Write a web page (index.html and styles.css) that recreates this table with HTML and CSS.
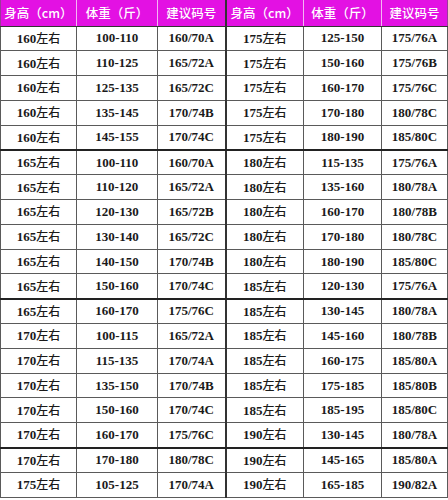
FILE: index.html
```html
<!DOCTYPE html>
<html lang="zh">
<head>
<meta charset="utf-8">
<link rel="stylesheet" href="styles.css">
</head>
<body>
<table class="size-table">
<colgroup>
<col class="c1"><col class="c2"><col class="c3"><col class="c4"><col class="c5"><col class="c6">
</colgroup>
<thead>
<tr class="head">
<th>身高（cm）</th><th>体重（斤）</th><th class="mid">建议码号</th><th>身高（cm）</th><th>体重（斤）</th><th>建议码号</th>
</tr>
</thead>
<tbody>
<tr><td>160<span class="cn">左右</span></td><td>100-110</td><td class="mid">160/70A</td><td>175<span class="cn">左右</span></td><td>125-150</td><td>175/76A</td></tr>
<tr><td>160<span class="cn">左右</span></td><td>110-125</td><td class="mid">165/72A</td><td>175<span class="cn">左右</span></td><td>150-160</td><td>175/76B</td></tr>
<tr><td>160<span class="cn">左右</span></td><td>125-135</td><td class="mid">165/72C</td><td>175<span class="cn">左右</span></td><td>160-170</td><td>175/76C</td></tr>
<tr><td>160<span class="cn">左右</span></td><td>135-145</td><td class="mid">170/74B</td><td>175<span class="cn">左右</span></td><td>170-180</td><td>180/78C</td></tr>
<tr class="grp"><td>160<span class="cn">左右</span></td><td>145-155</td><td class="mid">170/74C</td><td>175<span class="cn">左右</span></td><td>180-190</td><td>185/80C</td></tr>
<tr><td>165<span class="cn">左右</span></td><td>100-110</td><td class="mid">160/70A</td><td>180<span class="cn">左右</span></td><td>115-135</td><td>175/76A</td></tr>
<tr><td>165<span class="cn">左右</span></td><td>110-120</td><td class="mid">165/72A</td><td>180<span class="cn">左右</span></td><td>135-160</td><td>180/78A</td></tr>
<tr><td>165<span class="cn">左右</span></td><td>120-130</td><td class="mid">165/72B</td><td>180<span class="cn">左右</span></td><td>160-170</td><td>180/78B</td></tr>
<tr><td>165<span class="cn">左右</span></td><td>130-140</td><td class="mid">165/72C</td><td>180<span class="cn">左右</span></td><td>170-180</td><td>180/78C</td></tr>
<tr><td>165<span class="cn">左右</span></td><td>140-150</td><td class="mid">170/74B</td><td>180<span class="cn">左右</span></td><td>180-190</td><td>185/80C</td></tr>
<tr class="grp"><td>165<span class="cn">左右</span></td><td>150-160</td><td class="mid">170/74C</td><td>185<span class="cn">左右</span></td><td>120-130</td><td>175/76A</td></tr>
<tr><td>165<span class="cn">左右</span></td><td>160-170</td><td class="mid">175/76C</td><td>185<span class="cn">左右</span></td><td>130-145</td><td>180/78A</td></tr>
<tr><td>170<span class="cn">左右</span></td><td>100-115</td><td class="mid">165/72A</td><td>185<span class="cn">左右</span></td><td>145-160</td><td>180/78B</td></tr>
<tr><td>170<span class="cn">左右</span></td><td>115-135</td><td class="mid">170/74A</td><td>185<span class="cn">左右</span></td><td>160-175</td><td>185/80A</td></tr>
<tr><td>170<span class="cn">左右</span></td><td>135-150</td><td class="mid">170/74B</td><td>185<span class="cn">左右</span></td><td>175-185</td><td>185/80B</td></tr>
<tr><td>170<span class="cn">左右</span></td><td>150-160</td><td class="mid">170/74C</td><td>185<span class="cn">左右</span></td><td>185-195</td><td>185/80C</td></tr>
<tr class="grp"><td>170<span class="cn">左右</span></td><td>160-170</td><td class="mid">175/76C</td><td>190<span class="cn">左右</span></td><td>130-145</td><td>180/78A</td></tr>
<tr><td>170<span class="cn">左右</span></td><td>170-180</td><td class="mid">180/78C</td><td>190<span class="cn">左右</span></td><td>145-165</td><td>185/80A</td></tr>
<tr><td>175<span class="cn">左右</span></td><td>105-125</td><td class="mid">170/74A</td><td>190<span class="cn">左右</span></td><td>165-185</td><td>190/82A</td></tr>
</tbody>
</table>
</body>
</html>
```
FILE: styles.css
```css
html, body {
  margin: 0;
  padding: 0;
  background: #ffffff;
}

.size-table {
  width: 447px;
  border-collapse: collapse;
  table-layout: fixed;
  font-family: "Liberation Serif", "Noto Sans CJK SC", serif;
  color: #1a1a1a;
  line-height: 14px;
}

.c1 { width: 76px; }
.c2 { width: 81px; }
.c3 { width: 68px; }
.c4 { width: 78px; }
.c5 { width: 78px; }
.c6 { width: 66px; }

.head {
  height: 26px;
}

.head th {
  padding: 0;
  background: #e311e3;
  color: #ffffff;
  font-family: "Noto Sans CJK SC", sans-serif;
  font-weight: 500;
  font-size: 12.5px;
  text-align: center;
  border-left: 1px solid #f3b6f3;
  border-bottom: 1px solid #333333;
  border-top: 0;
}

.head th:first-child {
  border-left: 1px solid #9a3a9a;
}

.head th:last-child {
  border-right: 1px solid #9a3a9a;
}

tbody tr {
  height: 24.8px;
}

td {
  padding: 0;
  text-align: center;
  font-size: 13px;
  font-weight: 600;
  border: 1px solid #5a5a5a;
  white-space: nowrap;
}

.cn {
  font-family: "Noto Sans CJK SC", sans-serif;
  font-size: 12px;
  font-weight: 500;
}

td.mid, th.mid {
  border-right: 2px solid #333333;
}

tr.grp td {
  border-bottom: 2px solid #222222;
}
```
